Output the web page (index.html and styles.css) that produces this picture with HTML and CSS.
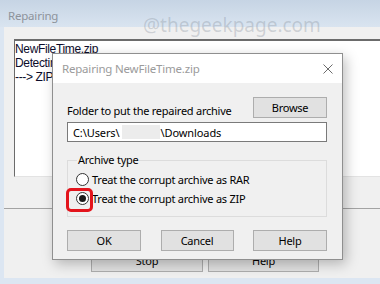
FILE: index.html
```html
<!DOCTYPE html>
<html lang="en">
  <head>
    <meta charset="UTF-8" />
    <title>Repairing</title>
    <link rel="stylesheet" href="styles.css">
  </head>
  <body>
    <!--
      Background progress window
    -->
    <div class="window">
      <div class="titlebar">Repairing</div>
      <div class="client">
        <div class="log">
          <div>NewFileTime.zip</div>
          <div class="cut">Detecting</div>
          <div class="cut">---&gt; ZIP</div>
        </div>
        <div class="status"></div>
        <div class="actions">
          <button class="btn stop" type="button">Stop</button>
          <button class="btn help-bg" type="button">Help</button>
        </div>
      </div>
    </div>

    <div class="watermark">@thegeekpage.com</div>

    <!--
      Repair dialog
    -->
    <form class="dialog">
      <div class="dialog-title">
        <span>Repairing NewFileTime.zip</span>
        <svg class="close" width="10" height="10" viewBox="0 0 10 10" aria-hidden="true">
          <path d="M0.5 0.5L9.5 9.5M9.5 0.5L0.5 9.5" stroke="#6b6b6b" stroke-width="1" fill="none" />
        </svg>
      </div>

      <div class="dialog-body">
        <div class="row">
          <span class="label">Folder to put the repaired archive</span>
          <button class="btn browse" type="button">Browse</button>
        </div>
        <div class="path">C:\Users\<span class="blur"></span>\Downloads</div>

        <fieldset class="group">
          <legend>Archive type</legend>
          <label class="option"><span class="radio"></span>Treat the corrupt archive as RAR</label>
          <label class="option"><span class="radio checked"></span>Treat the corrupt archive as ZIP</label>
        </fieldset>

        <div class="buttons">
          <button class="btn" type="submit">OK</button>
          <button class="btn cancel" type="button">Cancel</button>
          <button class="btn" type="button">Help</button>
        </div>
      </div>

      <span class="highlight"></span>
    </form>
  </body>
</html>
```

FILE: styles.css
```css
/*
  Global styles
*/

* {
  box-sizing: border-box;
}
body {
  margin: 0;
  width: 380px;
  height: 284px;
  overflow: hidden;
  position: relative;
  background-color: #dce6f2;
  font-family: "Noto Sans", sans-serif;
}

/*
  Background window
*/

.window {
  height: 284px;
}
.titlebar {
  height: 27px;
  padding: 9px 0 0 8px;
  font-size: 11.5px;
  line-height: 14px;
  letter-spacing: -0.2px;
  color: #8d939b;
  background: linear-gradient(#c6d4e4, #d9e4f0);
}
.client {
  height: 251px;
  margin-left: 4px;
  padding: 12px 0 0 10px;
  overflow: hidden;
  background-color: #f0f0f0;
}
.log {
  width: 420px;
  height: 138px;
  padding: 1px 0 0 0;
  background-color: #fff;
  border-top: 2px solid #6b6b6b;
  border-left: 1px solid #6b6b6b;
  border-bottom: 1px solid #e3e3e3;
  font-family: "Liberation Sans", sans-serif;
  font-size: 12px;
  line-height: 14px;
  letter-spacing: -0.35px;
  color: #0b0b2a;
  white-space: nowrap;
}
.log .cut {
  width: 37px;
  overflow: hidden;
}
.status {
  height: 32px;
  margin-left: -10px;
  border-bottom: 1px solid #a3a3a3;
}
.actions {
  display: flex;
  gap: 5px;
  padding: 40px 0 0 77px;
}
.actions .btn {
  height: 23px;
}
.stop {
  width: 112px;
}
.help-bg {
  width: 111px;
}

.watermark {
  position: absolute;
  left: 143px;
  top: 16px;
  font-size: 19px;
  line-height: 19px;
  color: rgba(130, 140, 152, 0.32);
}

/*
  Dialog
*/

.dialog {
  position: absolute;
  left: 52px;
  top: 53px;
  width: 291px;
  height: 207px;
  margin: 0;
  font-size: 11px;
  letter-spacing: -0.25px;
  color: #000;
  background-color: #f0f0f0;
  border: 1px solid #8f8f8f;
  box-shadow: 3px 4px 12px rgba(0, 0, 0, 0.25);
}
.dialog-title {
  display: flex;
  align-items: center;
  justify-content: space-between;
  height: 29px;
  padding: 0 9px 0 9px;
  font-size: 11.5px;
  letter-spacing: -0.2px;
  color: #9b9b9b;
  background-color: #fff;
}
.dialog-body {
  padding: 14px 15px 0 14px;
}
.btn {
  height: 21px;
  padding: 0;
  font-family: "Noto Sans", sans-serif;
  font-size: 11px;
  letter-spacing: -0.25px;
  color: #000;
  background-color: #e1e1e1;
  border: 1px solid #adadad;
}
.row {
  display: flex;
  align-items: flex-end;
  justify-content: space-between;
}
.browse {
  width: 74px;
}
.path {
  display: flex;
  align-items: center;
  height: 20px;
  margin-top: 4px;
  padding: 0 5px;
  letter-spacing: -0.1px;
  background-color: #fff;
  border: 1px solid #7a7a7a;
}
.blur {
  width: 38px;
  height: 14px;
  margin: 0 1px 0 2px;
  background-color: #ececec;
}
.group {
  height: 64px;
  margin: 11px 0 0;
  padding: 3px 0 0 8px;
  min-width: 0;
  border: 1px solid #dcdcdc;
}
.group legend {
  margin-left: 1px;
  padding: 0 1px;
  line-height: 14px;
}
.option {
  display: flex;
  align-items: center;
  gap: 3px;
  height: 19px;
}
.radio {
  position: relative;
  width: 13px;
  height: 13px;
  border-radius: 50%;
  background-color: #fff;
  border: 1px solid #333;
}
.radio.checked::after {
  content: "";
  position: absolute;
  left: 2px;
  top: 2px;
  width: 7px;
  height: 7px;
  border-radius: 50%;
  background-color: #1a1a1a;
}
.buttons {
  display: flex;
  justify-content: space-between;
  margin-top: 13px;
}
.buttons .btn {
  width: 74px;
}
.buttons .cancel {
  width: 73px;
}
.highlight {
  position: absolute;
  left: 13px;
  top: 134px;
  width: 27px;
  height: 24px;
  border: 3px solid #e3141c;
  border-radius: 5px;
}
```
